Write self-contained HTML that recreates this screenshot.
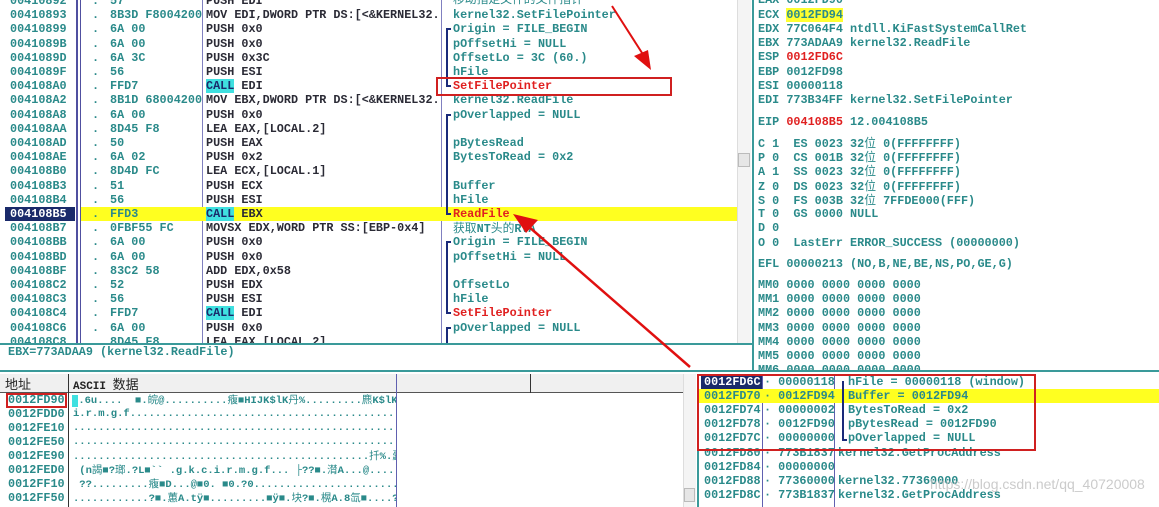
<!DOCTYPE html>
<html><head><meta charset="utf-8"><style>
*{margin:0;padding:0;box-sizing:border-box}
body{width:1159px;height:507px;overflow:hidden;background:#fff;position:relative;font-family:"Liberation Mono","Noto Sans CJK SC",monospace;font-weight:bold;font-size:11.8px;color:#2a8a8a}
.r{position:absolute;left:0;height:14px;line-height:14px;white-space:pre;width:1159px}
.r span{position:absolute;white-space:pre}
.a{left:10px}.d{left:92px}.b{left:110px}.i{left:206px;color:#2a2a35}.c{left:453px}
.red{color:#e02020}
.cl{background:#3fe0e0;color:#1a2a6a}
.ab{position:absolute}
.v{position:absolute;background:#1a2a7a;width:2px}
.h{position:absolute;background:#1a2a7a;height:2px;width:5px}
.cjk{font-family:"Noto Sans CJK SC",sans-serif;font-weight:normal}
.dd{font-size:10.5px}
</style></head><body>

<div class="ab" style="left:76px;top:0;width:2px;height:343px;background:#5050a0"></div>
<div class="ab" style="left:80px;top:0;width:1px;height:343px;background:#5050a0"></div>
<div class="ab" style="left:202px;top:0;width:1px;height:343px;background:#8080c0"></div>
<div class="ab" style="left:441px;top:0;width:1px;height:343px;background:#8080c0"></div>
<div class="ab" style="left:737px;top:0;width:14px;height:343px;background:#f4f4f4;border-left:1px solid #ddd"></div>
<div class="ab" style="left:738px;top:153px;width:12px;height:14px;background:#e6e6e6;border:1px solid #bbb"></div>
<div class="ab" style="left:0;top:343px;width:752px;height:2px;background:#3a9a9a"></div>
<div class="ab" style="left:752px;top:0;width:2px;height:372px;background:#3a9a9a"></div>
<div class="ab" style="left:0;top:370px;width:1159px;height:2px;background:#3a9a9a"></div>

<div class="ab" style="left:81px;top:207px;width:656px;height:14px;background:#ffff20"></div>
<div class="ab" style="left:5px;top:207px;width:70px;height:14px;background:#1a2a6a"></div>

<div class="r" style="top:-6px"><span class="a">00410892</span><span class="d">.</span><span class="b">57</span><span class="i">PUSH EDI</span><span class="c cjk" style="top:-2px">移动指定文件的文件指针</span></div>
<div class="r" style="top:8px"><span class="a">00410893</span><span class="d">.</span><span class="b">8B3D F8004200</span><span class="i">MOV EDI,DWORD PTR DS:[&lt;&amp;KERNEL32.</span><span class="c">kernel32.SetFilePointer</span></div>
<div class="r" style="top:22px"><span class="a">00410899</span><span class="d">.</span><span class="b">6A 00</span><span class="i">PUSH 0x0</span><span class="c">Origin = FILE_BEGIN</span></div>
<div class="r" style="top:37px"><span class="a">0041089B</span><span class="d">.</span><span class="b">6A 00</span><span class="i">PUSH 0x0</span><span class="c">pOffsetHi = NULL</span></div>
<div class="r" style="top:51px"><span class="a">0041089D</span><span class="d">.</span><span class="b">6A 3C</span><span class="i">PUSH 0x3C</span><span class="c">OffsetLo = 3C (60.)</span></div>
<div class="r" style="top:65px"><span class="a">0041089F</span><span class="d">.</span><span class="b">56</span><span class="i">PUSH ESI</span><span class="c">hFile</span></div>
<div class="r" style="top:79px"><span class="a">004108A0</span><span class="d">.</span><span class="b">FFD7</span><span class="i"><b class="cl">CALL</b> EDI</span><span class="c red">SetFilePointer</span></div>
<div class="r" style="top:93px"><span class="a">004108A2</span><span class="d">.</span><span class="b">8B1D 68004200</span><span class="i">MOV EBX,DWORD PTR DS:[&lt;&amp;KERNEL32.</span><span class="c">kernel32.ReadFile</span></div>
<div class="r" style="top:108px"><span class="a">004108A8</span><span class="d">.</span><span class="b">6A 00</span><span class="i">PUSH 0x0</span><span class="c">pOverlapped = NULL</span></div>
<div class="r" style="top:122px"><span class="a">004108AA</span><span class="d">.</span><span class="b">8D45 F8</span><span class="i">LEA EAX,[LOCAL.2]</span></div>
<div class="r" style="top:136px"><span class="a">004108AD</span><span class="d">.</span><span class="b">50</span><span class="i">PUSH EAX</span><span class="c">pBytesRead</span></div>
<div class="r" style="top:150px"><span class="a">004108AE</span><span class="d">.</span><span class="b">6A 02</span><span class="i">PUSH 0x2</span><span class="c">BytesToRead = 0x2</span></div>
<div class="r" style="top:164px"><span class="a">004108B0</span><span class="d">.</span><span class="b">8D4D FC</span><span class="i">LEA ECX,[LOCAL.1]</span></div>
<div class="r" style="top:179px"><span class="a">004108B3</span><span class="d">.</span><span class="b">51</span><span class="i">PUSH ECX</span><span class="c">Buffer</span></div>
<div class="r" style="top:193px"><span class="a">004108B4</span><span class="d">.</span><span class="b">56</span><span class="i">PUSH ESI</span><span class="c">hFile</span></div>
<div class="r" style="top:207px"><span class="a" style="color:#fff">004108B5</span><span class="d">.</span><span class="b">FFD3</span><span class="i"><b class="cl">CALL</b> EBX</span><span class="c red">ReadFile</span></div>
<div class="r" style="top:221px"><span class="a">004108B7</span><span class="d">.</span><span class="b">0FBF55 FC</span><span class="i">MOVSX EDX,WORD PTR SS:[EBP-0x4]</span><span class="c"><b class="cjk">获取</b>NT<b class="cjk">头的</b>RVA</span></div>
<div class="r" style="top:235px"><span class="a">004108BB</span><span class="d">.</span><span class="b">6A 00</span><span class="i">PUSH 0x0</span><span class="c">Origin = FILE_BEGIN</span></div>
<div class="r" style="top:250px"><span class="a">004108BD</span><span class="d">.</span><span class="b">6A 00</span><span class="i">PUSH 0x0</span><span class="c">pOffsetHi = NULL</span></div>
<div class="r" style="top:264px"><span class="a">004108BF</span><span class="d">.</span><span class="b">83C2 58</span><span class="i">ADD EDX,0x58</span></div>
<div class="r" style="top:278px"><span class="a">004108C2</span><span class="d">.</span><span class="b">52</span><span class="i">PUSH EDX</span><span class="c">OffsetLo</span></div>
<div class="r" style="top:292px"><span class="a">004108C3</span><span class="d">.</span><span class="b">56</span><span class="i">PUSH ESI</span><span class="c">hFile</span></div>
<div class="r" style="top:306px"><span class="a">004108C4</span><span class="d">.</span><span class="b">FFD7</span><span class="i"><b class="cl">CALL</b> EDI</span><span class="c red">SetFilePointer</span></div>
<div class="r" style="top:321px"><span class="a">004108C6</span><span class="d">.</span><span class="b">6A 00</span><span class="i">PUSH 0x0</span><span class="c">pOverlapped = NULL</span></div>
<div class="ab" style="left:0;top:335px;width:737px;height:8px;overflow:hidden"><div class="r" style="top:0"><span class="a">004108C8</span><span class="d">.</span><span class="b">8D45 F8</span><span class="i">LEA EAX,[LOCAL.2]</span></div></div>

<div class="v" style="left:446px;top:28px;height:59px"></div><div class="h" style="left:446px;top:28px"></div><div class="h" style="left:446px;top:85px"></div>
<div class="v" style="left:446px;top:114px;height:101px"></div><div class="h" style="left:446px;top:114px"></div><div class="h" style="left:446px;top:213px"></div>
<div class="v" style="left:446px;top:241px;height:73px"></div><div class="h" style="left:446px;top:241px"></div><div class="h" style="left:446px;top:312px"></div>
<div class="v" style="left:446px;top:327px;height:16px"></div><div class="h" style="left:446px;top:327px"></div>

<div class="r" style="top:345px"><span style="left:8px">EBX=773ADAA9 (kernel32.ReadFile)</span></div>

<div class="r" style="top:-7px"><span style="left:758px">EAX 0012FD90</span></div>
<div class="r" style="top:8px"><span style="left:758px">ECX <b style="background:#ffff30">0012FD94</b></span></div>
<div class="r" style="top:22px"><span style="left:758px">EDX 77C064F4 ntdll.KiFastSystemCallRet</span></div>
<div class="r" style="top:36px"><span style="left:758px">EBX 773ADAA9 kernel32.ReadFile</span></div>
<div class="r" style="top:50px"><span style="left:758px">ESP <b class="red">0012FD6C</b></span></div>
<div class="r" style="top:65px"><span style="left:758px">EBP 0012FD98</span></div>
<div class="r" style="top:79px"><span style="left:758px">ESI 00000118</span></div>
<div class="r" style="top:93px"><span style="left:758px">EDI 773B34FF kernel32.SetFilePointer</span></div>
<div class="r" style="top:115px"><span style="left:758px">EIP <b class="red">004108B5</b> 12.004108B5</span></div>
<div class="r" style="top:136px"><span style="left:758px">C 1  ES 0023 32<b class="cjk">位</b> 0(FFFFFFFF)</span></div>
<div class="r" style="top:150px"><span style="left:758px">P 0  CS 001B 32<b class="cjk">位</b> 0(FFFFFFFF)</span></div>
<div class="r" style="top:164px"><span style="left:758px">A 1  SS 0023 32<b class="cjk">位</b> 0(FFFFFFFF)</span></div>
<div class="r" style="top:179px"><span style="left:758px">Z 0  DS 0023 32<b class="cjk">位</b> 0(FFFFFFFF)</span></div>
<div class="r" style="top:193px"><span style="left:758px">S 0  FS 003B 32<b class="cjk">位</b> 7FFDE000(FFF)</span></div>
<div class="r" style="top:207px"><span style="left:758px">T 0  GS 0000 NULL</span></div>
<div class="r" style="top:221px"><span style="left:758px">D 0</span></div>
<div class="r" style="top:236px"><span style="left:758px">O 0  LastErr ERROR_SUCCESS (00000000)</span></div>
<div class="r" style="top:257px"><span style="left:758px">EFL 00000213 (NO,B,NE,BE,NS,PO,GE,G)</span></div>
<div class="r" style="top:278px"><span style="left:758px">MM0 0000 0000 0000 0000</span></div>
<div class="r" style="top:292px"><span style="left:758px">MM1 0000 0000 0000 0000</span></div>
<div class="r" style="top:306px"><span style="left:758px">MM2 0000 0000 0000 0000</span></div>
<div class="r" style="top:321px"><span style="left:758px">MM3 0000 0000 0000 0000</span></div>
<div class="r" style="top:335px"><span style="left:758px">MM4 0000 0000 0000 0000</span></div>
<div class="r" style="top:349px"><span style="left:758px">MM5 0000 0000 0000 0000</span></div>
<div class="ab" style="left:754px;top:363px;width:400px;height:7px;overflow:hidden"><div class="r" style="top:0;left:-754px"><span style="left:758px">MM6 0000 0000 0000 0000</span></div></div>

<div class="ab" style="left:0;top:374px;width:683px;height:19px;background:#f0f0f0;border-bottom:1px solid #555"></div>
<div class="ab" style="left:68px;top:374px;width:1px;height:133px;background:#333"></div>
<div class="ab" style="left:396px;top:374px;width:1px;height:133px;background:#6060b0"></div>
<div class="ab" style="left:530px;top:374px;width:1px;height:19px;background:#333"></div>
<div class="ab" style="left:5px;top:375px;color:#222;font-family:'Noto Sans CJK SC',sans-serif;font-weight:normal;font-size:13px;line-height:17px">地址</div>
<div class="ab" style="left:73px;top:375px;color:#222;font-size:11px;line-height:17px">ASCII <b class="cjk" style="font-size:13px">数据</b></div>
<div class="ab" style="left:683px;top:374px;width:13px;height:133px;background:#f4f4f4;border-left:1px solid #ddd"></div>
<div class="ab" style="left:684px;top:488px;width:11px;height:14px;background:#e6e6e6;border:1px solid #bbb"></div>
<div class="ab" style="left:6px;top:393px;width:61px;height:15px;border:2px solid #d02020"></div>

<div class="ab dd" style="left:69px;top:393px;width:327px;height:114px;overflow:hidden">
<div class="r" style="top:0;left:3px"><b style="background:#3fe0e0"> </b>.6u....  ■.<b class="cjk">皖</b>@..........<b class="cjk">癁</b>■HIJK$lK<b class="cjk">丹</b>%.........<b class="cjk">麃</b>K$lK.g.k.c.</div>
<div class="r" style="top:14px;left:4px">i.r.m.g.f..........................................</div>
<div class="r" style="top:28px;left:4px">...................................................</div>
<div class="r" style="top:42px;left:4px">...................................................</div>
<div class="r" style="top:56px;left:4px">...............................................<b class="cjk">扦</b>%.<b class="cjk">蠹</b>■.</div>
<div class="r" style="top:70px;left:4px"> (n<b class="cjk">謁</b>■?<b class="cjk">瑯</b>.?L■`` .g.k.c.i.r.m.g.f... ├??■.<b class="cjk">潸</b>A...@.....?0.....</div>
<div class="r" style="top:84px;left:4px"> ??.........<b class="cjk">癁</b>■D...@■0. ■0.?0..........................</div>
<div class="r" style="top:98px;left:4px">............?■.<b class="cjk">蕙</b>A.tÿ■.........■ÿ■.<b class="cjk">块</b>?■.<b class="cjk">榥</b>A.8<b class="cjk">氙</b>■....?■.t■;w</div>
</div>
<div class="r" style="top:393px"><span style="left:8px">0012FD90</span></div>
<div class="r" style="top:407px"><span style="left:8px">0012FDD0</span></div>
<div class="r" style="top:421px"><span style="left:8px">0012FE10</span></div>
<div class="r" style="top:435px"><span style="left:8px">0012FE50</span></div>
<div class="r" style="top:449px"><span style="left:8px">0012FE90</span></div>
<div class="r" style="top:463px"><span style="left:8px">0012FED0</span></div>
<div class="r" style="top:477px"><span style="left:8px">0012FF10</span></div>
<div class="r" style="top:491px"><span style="left:8px">0012FF50</span></div>

<div class="ab" style="left:697px;top:374px;width:2px;height:133px;background:#3a9a9a"></div>
<div class="ab" style="left:762px;top:374px;width:1px;height:133px;background:#6060b0"></div>
<div class="ab" style="left:834px;top:374px;width:1px;height:133px;background:#6060b0"></div>
<div class="ab" style="left:701px;top:374px;width:61px;height:15px;background:#1a2a6a"></div>
<div class="ab" style="left:699px;top:389px;width:460px;height:14px;background:#ffff20"></div>
<div class="v" style="left:842px;top:381px;height:60px"></div><div class="h" style="left:842px;top:439px"></div>
<div class="r" style="top:375px"><span style="left:704px;color:#fff">0012FD6C</span><span style="left:764px">· 00000118</span><span style="left:848px">hFile = 00000118 (window)</span></div>
<div class="r" style="top:389px"><span style="left:704px">0012FD70</span><span style="left:764px">· 0012FD94</span><span style="left:848px">Buffer = 0012FD94</span></div>
<div class="r" style="top:403px"><span style="left:704px">0012FD74</span><span style="left:764px">· 00000002</span><span style="left:848px">BytesToRead = 0x2</span></div>
<div class="r" style="top:417px"><span style="left:704px">0012FD78</span><span style="left:764px">· 0012FD90</span><span style="left:848px">pBytesRead = 0012FD90</span></div>
<div class="r" style="top:431px"><span style="left:704px">0012FD7C</span><span style="left:764px">· 00000000</span><span style="left:848px">pOverlapped = NULL</span></div>
<div class="r" style="top:446px"><span style="left:704px">0012FD80</span><span style="left:764px">· 773B1837</span><span style="left:838px">kernel32.GetProcAddress</span></div>
<div class="r" style="top:460px"><span style="left:704px">0012FD84</span><span style="left:764px">· 00000000</span></div>
<div class="r" style="top:474px"><span style="left:704px">0012FD88</span><span style="left:764px">· 77360000</span><span style="left:838px">kernel32.77360000</span></div>
<div class="r" style="top:488px"><span style="left:704px">0012FD8C</span><span style="left:764px">· 773B1837</span><span style="left:838px">kernel32.GetProcAddress</span></div>
<div class="ab" style="left:697px;top:374px;width:339px;height:77px;border:2px solid #d02020"></div>
<div class="ab" style="left:930px;top:476px;color:rgba(190,190,190,.8);font-family:'Liberation Sans',sans-serif;font-weight:normal;font-size:14px">https://blog.csdn.net/qq_40720008</div>

<div class="ab" style="left:436px;top:77px;width:236px;height:19px;border:2px solid #d02020"></div>
<svg class="ab" style="left:0;top:0" width="1159" height="507">
<line x1="612" y1="6" x2="644" y2="56" stroke="#e01010" stroke-width="2"/>
<polygon points="651,70 634,56 648,50" fill="#e01010"/>
<line x1="690" y1="367" x2="528" y2="226" stroke="#e01010" stroke-width="2.5"/>
<polygon points="513,214 538,220 526,233" fill="#e01010"/>
</svg>
</body></html>
